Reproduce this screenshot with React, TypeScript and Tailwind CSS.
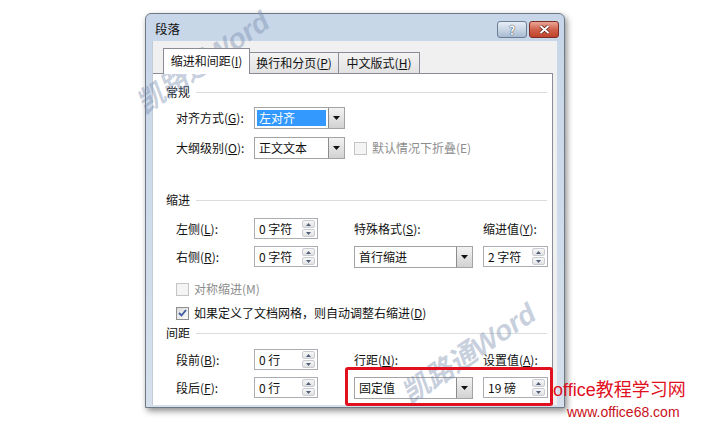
import React from "react";

const CJK = "font-['Noto_Sans_CJK_SC','Microsoft_YaHei',sans-serif]";

function Arrow({ up }: { up?: boolean }) {
  return (
    <svg width="5" height="3" viewBox="0 0 5 3">
      <path d={up ? "M0 3 L2.5 0 L5 3Z" : "M0 0 L2.5 3 L5 0Z"} fill="#4f5f7a" />
    </svg>
  );
}

function SpinBox({ value, w = "w-[64px]" }: { value: string; w?: string }) {
  return (
    <div className={`${w} h-[21px] border border-[#abadb3] bg-white flex items-center pl-[4px] pr-[2px]`}>
      <span className="flex-1 text-[12px] text-[#111]">{value}</span>
      <div className="flex flex-col w-[13px] h-[17px] gap-px">
        <div className="flex-1 rounded-[2px] border border-[#c9cdd3] bg-gradient-to-b from-[#f7f7f7] to-[#e2e2e2] flex items-center justify-center">
          <Arrow up />
        </div>
        <div className="flex-1 rounded-[2px] border border-[#c9cdd3] bg-gradient-to-b from-[#f7f7f7] to-[#e2e2e2] flex items-center justify-center">
          <Arrow />
        </div>
      </div>
    </div>
  );
}

function Combo({ value, w, selected }: { value: string; w: string; selected?: boolean }) {
  return (
    <div className={`${w} h-[22px] border border-[#a3a3a3] bg-white flex items-stretch`}>
      <div className="flex-1 p-[2px] flex">
        <div
          className={`flex-1 flex items-center px-[2px] text-[12px] ${
            selected ? "bg-[#3399ff] text-white" : "text-[#111]"
          }`}
        >
          {value}
        </div>
      </div>
      <div className="w-[16px] border-l border-[#8c8c8c] bg-gradient-to-b from-[#f3f3f3] to-[#d2d2d2] flex items-center justify-center">
        <svg width="7" height="4" viewBox="0 0 7 4">
          <path d="M0 0 L3.5 4 L7 0Z" fill="#111" />
        </svg>
      </div>
    </div>
  );
}

function CheckBox({ checked, disabled }: { checked?: boolean; disabled?: boolean }) {
  return (
    <div
      className={`w-[13px] h-[13px] border flex items-center justify-center ${
        disabled ? "border-[#c4c4c4] bg-[#f4f4f4]" : "border-[#8e8f8f] bg-gradient-to-br from-[#dcdcdc] to-[#fbfbfb]"
      }`}
    >
      {checked && (
        <svg width="9" height="8" viewBox="0 0 9 8">
          <path d="M1 4 L3.5 6.5 L8 1" stroke="#3b5aa0" strokeWidth="1.8" fill="none" />
        </svg>
      )}
    </div>
  );
}

function Section({ title, mt }: { title: string; mt: string }) {
  return (
    <div className={`flex items-center h-[16px] pl-[13px] pr-[5px] ${mt}`}>
      <span className="text-[12px] text-[#111]">{title}</span>
      <div className="flex-1 h-px bg-[#dcdcdc] ml-[6px]" />
    </div>
  );
}

export default function App() {
  return (
    <div className={`relative w-[710px] h-[430px] bg-white overflow-hidden pt-[13px] pl-[145px] ${CJK}`}>
      {/* Dialog window */}
      <div className="w-[420px] h-[395px] flex flex-col rounded-t-[6px] border border-[#6f7885] bg-gradient-to-b from-[#c7d6e8] to-[#d5e0ec] shadow-[2px_3px_6px_rgba(0,0,0,0.45)]">
        {/* Title bar */}
        <div className="h-[27px] flex items-start pl-[9px] pr-[5px]">
          <span className="mt-[7px] text-[12.5px] leading-[16px] text-[#111] flex-1">段落</span>
          <div className="flex gap-[2px] mt-[7px]">
            <div className="w-[30px] h-[17px] rounded-[3px] border border-[#6d7e94] bg-gradient-to-b from-[#e6edf5] via-[#c9d6e5] to-[#a8bbd2] flex items-center justify-center">
              <span className="text-[12px] font-bold leading-none text-white [text-shadow:0_0_1px_#2c3a4f,0_0_1px_#2c3a4f]">?</span>
            </div>
            <div className="w-[30px] h-[17px] rounded-[3px] border border-[#7d2d23] bg-gradient-to-b from-[#e9a597] via-[#d0624c] to-[#c0422b] flex items-center justify-center">
              <svg width="11" height="9" viewBox="0 0 11 9">
                <path d="M1.5 1 L9.5 8 M9.5 1 L1.5 8" stroke="#5a1e16" strokeWidth="3.4" />
                <path d="M1.5 1 L9.5 8 M9.5 1 L1.5 8" stroke="#ffffff" strokeWidth="2" />
              </svg>
            </div>
          </div>
        </div>

        {/* Frame + client */}
        <div className="flex-1 flex pl-[6px] pr-[7px] pb-[2px] min-h-0">
          <div className="flex-1 bg-[#f0f0f0] flex flex-col pr-[4px] pt-[7px] min-h-0 border-l border-[#c3ccd6]">
            {/* Tabs */}
            <div className="flex items-end h-[25px] pl-[10px] text-[12px] text-[#111]">
              <div className="relative z-10 w-[87px] h-[26px] -mb-px bg-white border border-b-0 border-[#898c95] flex items-center justify-center pb-[2px]">
                缩进和间距(<u>I</u>)
              </div>
              <div className="w-[90px] h-[21px] -ml-px border border-b-0 border-[#898c95] bg-gradient-to-b from-[#f3f3f3] to-[#e2e2e2] flex items-center justify-center">
                换行和分页(<u>P</u>)
              </div>
              <div className="w-[82px] h-[21px] -ml-px border border-b-0 border-[#898c95] bg-gradient-to-b from-[#f3f3f3] to-[#e2e2e2] flex items-center justify-center">
                中文版式(<u>H</u>)
              </div>
            </div>

            {/* Tab page */}
            <div className="flex-1 bg-white border-t border-r border-[#898c95] flex flex-col text-[12px] text-[#111]">
              <Section title="常规" mt="mt-[10px]" />
              <div className="grid grid-cols-[78px_100px_129px_1fr] pl-[23px] mt-[7px] h-[22px] items-center">
                <span>对齐方式(<u>G</u>):</span>
                <Combo value="左对齐" w="w-[91px]" selected />
              </div>
              <div className="grid grid-cols-[78px_100px_1fr] pl-[23px] mt-[8px] h-[22px] items-center">
                <span>大纲级别(<u>O</u>):</span>
                <Combo value="正文文本" w="w-[91px]" />
                <div className="flex items-center gap-[5px] text-[#8d8d8d]">
                  <CheckBox disabled />
                  <span>默认情况下折叠(E)</span>
                </div>
              </div>

              <Section title="缩进" mt="mt-[33px]" />
              <div className="grid grid-cols-[78px_100px_129px_1fr] pl-[23px] mt-[10px] h-[21px] items-center">
                <span>左侧(<u>L</u>):</span>
                <SpinBox value="0 字符" />
                <span>特殊格式(<u>S</u>):</span>
                <span>缩进值(<u>Y</u>):</span>
              </div>
              <div className="grid grid-cols-[78px_100px_129px_1fr] pl-[23px] mt-[6px] h-[23px] items-center">
                <span>右侧(<u>R</u>):</span>
                <SpinBox value="0 字符" />
                <Combo value="首行缩进" w="w-[119px]" />
                <SpinBox value="2 字符" w="w-[65px]" />
              </div>
              <div className="flex items-center gap-[5px] pl-[23px] mt-[13px] h-[16px] text-[#8d8d8d]">
                <CheckBox disabled />
                <span>对称缩进(M)</span>
              </div>
              <div className="flex items-center gap-[5px] pl-[23px] mt-[8px] h-[16px]">
                <CheckBox checked />
                <span>
                  如果定义了文档网格，则自动调整右缩进(<u>D</u>)
                </span>
              </div>

              <Section title="间距" mt="mt-[4px]" />
              <div className="grid grid-cols-[78px_100px_129px_1fr] pl-[23px] mt-[8px] h-[21px] items-center">
                <span>段前(<u>B</u>):</span>
                <SpinBox value="0 行" />
                <span>行距(<u>N</u>):</span>
                <span>设置值(<u>A</u>):</span>
              </div>
              <div className="grid grid-cols-[78px_100px_129px_1fr] pl-[23px] mt-[6px] h-[23px] items-center">
                <span>段后(<u>F</u>):</span>
                <SpinBox value="0 行" />
                <Combo value="固定值" w="w-[119px]" />
                <SpinBox value="19 磅" w="w-[65px]" />
              </div>
            </div>
          </div>
        </div>
      </div>

      {/* Watermarks */}
      <div className="absolute left-[117px] top-[47px] w-[172px] text-center -rotate-[35deg] text-[28px] leading-[32px] font-bold italic text-[rgba(120,140,175,0.42)] font-['Liberation_Sans','Noto_Sans_CJK_SC',sans-serif]">
        凯路通Word
      </div>
      <div className="absolute left-[383px] top-[338px] w-[172px] text-center -rotate-[34deg] text-[28px] leading-[32px] font-bold italic text-[rgba(120,140,175,0.42)] font-['Liberation_Sans','Noto_Sans_CJK_SC',sans-serif]">
        凯路通Word
      </div>

      {/* Highlight box */}
      <div className="absolute left-[345px] top-[367px] w-[208px] h-[39px] border-[3px] border-[#e1101e] rounded-[3px]" />

      {/* Site caption */}
      <div className="absolute left-[553px] top-[378px] text-[18px] leading-[24px] text-[#e1101e] font-['Liberation_Sans','Noto_Sans_CJK_SC',sans-serif]">
        office教程学习网
      </div>
      <div className="absolute left-[567px] top-[403px] text-[14px] leading-[18px] text-[#c8101a] font-['Liberation_Sans',sans-serif]">
        www.office68.com
      </div>
    </div>
  );
}
